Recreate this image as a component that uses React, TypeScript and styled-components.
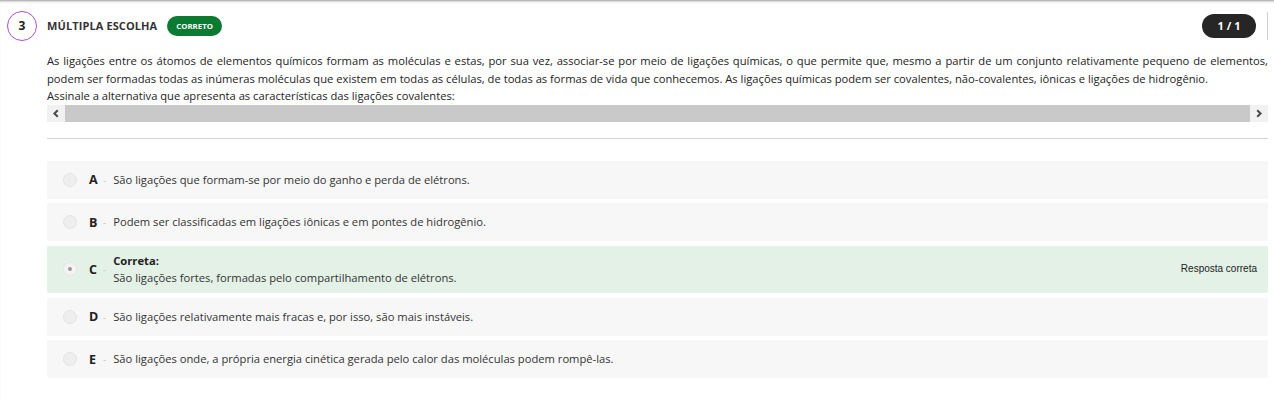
import React from "react";
import styled, { createGlobalStyle } from "styled-components";

const Global = createGlobalStyle`
  html, body { margin: 0; padding: 0; background: #fff; }
  body { font-family: "Open Sans", "Liberation Sans", sans-serif; color: #222; }
`;

const Page = styled.div`
  width: 1274px;
  height: 400px;
  box-sizing: border-box;
  border-top: 1px solid #b8b8b8;
  box-shadow: inset 0 2px 2px -1px rgba(0, 0, 0, 0.18);
  overflow: hidden;
`;

const Header = styled.div`
  display: flex;
  align-items: center;
  padding: 9px 6px 0 7px;
  height: 31px;
`;

const Number = styled.div`
  width: 28px;
  height: 28px;
  border: 1px solid #b04ed0;
  border-radius: 50%;
  display: flex;
  align-items: center;
  justify-content: center;
  font-size: 12px;
  font-weight: 700;
  color: #222;
`;

const Title = styled.div`
  margin-left: 10px;
  font-size: 11px;
  font-weight: 700;
  color: #333;
  letter-spacing: 0.1px;
`;

const Badge = styled.div`
  margin-left: 10px;
  height: 20px;
  padding: 0 9px;
  border-radius: 10px;
  background: #0a7b30;
  color: #fff;
  font-size: 7.8px;
  font-weight: 700;
  display: flex;
  align-items: center;
`;

const Spacer = styled.div`
  flex: 1;
`;

const Counter = styled.div`
  width: 54px;
  height: 24px;
  border-radius: 12px;
  background: #262626;
  color: #fff;
  font-size: 11px;
  font-weight: 700;
  display: flex;
  align-items: center;
  justify-content: center;
`;

const VLine = styled.div`
  width: 1px;
  height: 28px;
  background: #cfcfcf;
  margin-left: 11px;
`;

const Body = styled.div`
  padding: 11px 6px 0 47px;
`;

const Statement = styled.p`
  margin: 0;
  font-size: 11.2px;
  line-height: 17.5px;
  text-align: justify;
  color: #222;
`;

const ScrollBar = styled.div`
  display: flex;
  height: 17px;
  background: #f1f1f1;
`;

const ScrollArrow = styled.div`
  width: 18px;
  display: flex;
  align-items: center;
  justify-content: center;
`;

const ScrollThumb = styled.div`
  flex: 1;
  background: #c9c9c9;
`;

const Divider = styled.div`
  height: 1px;
  background: #d6d6d6;
  margin: 16px 0 22px;
`;

const Options = styled.div`
  display: flex;
  flex-direction: column;
  gap: 4.5px;
`;

const Option = styled.div<{ $correct?: boolean }>`
  display: flex;
  align-items: center;
  min-height: 38px;
  padding: ${(p) => (p.$correct ? "6.25px 11px 6.25px 16px" : "0 11px 0 16px")};
  box-sizing: border-box;
  border-radius: 2px;
  background: ${(p) => (p.$correct ? "#e3f1e7" : "#f7f7f7")};
`;

const Radio = styled.div<{ $checked?: boolean }>`
  width: 12px;
  height: 12px;
  border-radius: 50%;
  border: 1px solid ${(p) => (p.$checked ? "#e6e6e6" : "#e4e4e4")};
  background: ${(p) => (p.$checked ? "#f3f3f3" : "#eeeeee")};
  display: flex;
  align-items: center;
  justify-content: center;
  flex-shrink: 0;
  &::after {
    content: "";
    display: ${(p) => (p.$checked ? "block" : "none")};
    width: 4px;
    height: 4px;
    border-radius: 50%;
    background: #9a9a9a;
  }
`;

const Letter = styled.div`
  margin-left: 12px;
  width: 10px;
  font-size: 12.5px;
  font-weight: 700;
  color: #222;
`;

const Dash = styled.div`
  margin-left: 4px;
  font-size: 10px;
  color: #c8c8c8;
`;

const OptionText = styled.div`
  margin-left: 7px;
  font-size: 11.2px;
  line-height: 17.5px;
  color: #333;
  flex: 1;
`;

const CorrectLabel = styled.div`
  font-weight: 700;
  color: #222;
`;

const Feedback = styled.div`
  font-family: "Liberation Sans", Arial, sans-serif;
  font-size: 10px;
  color: #222;
  align-self: flex-start;
  margin-top: 11px;
`;

const ChevronLeft = () => (
  <svg width="8" height="9" viewBox="0 0 8 9">
    <path d="M5.8 1.2 L2.4 4.5 L5.8 7.8" stroke="#4a4a4a" strokeWidth="2" fill="none" />
  </svg>
);

const ChevronRight = () => (
  <svg width="8" height="9" viewBox="0 0 8 9">
    <path d="M2.2 1.2 L5.6 4.5 L2.2 7.8" stroke="#4a4a4a" strokeWidth="2" fill="none" />
  </svg>
);

const options = [
  { letter: "A", text: "São ligações que formam-se por meio do ganho e perda de elétrons." },
  { letter: "B", text: "Podem ser classificadas em ligações iônicas e em pontes de hidrogênio." },
  { letter: "C", text: "São ligações fortes, formadas pelo compartilhamento de elétrons.", correct: true },
  { letter: "D", text: "São ligações relativamente mais fracas e, por isso, são mais instáveis." },
  { letter: "E", text: "São ligações onde, a própria energia cinética gerada pelo calor das moléculas podem rompê-las." },
];

export default function App() {
  return (
    <>
      <Global />
      <Page>
        <Header>
          <Number>3</Number>
          <Title>MÚLTIPLA ESCOLHA</Title>
          <Badge>CORRETO</Badge>
          <Spacer />
          <Counter>1 / 1</Counter>
          <VLine />
        </Header>
        <Body>
          <Statement>
            As ligações entre os átomos de elementos químicos formam as moléculas e estas, por sua vez, associar-se por meio de ligações químicas, o que permite que, mesmo a partir de um conjunto relativamente pequeno de elementos, podem ser formadas todas as inúmeras moléculas que existem em todas as células, de todas as formas de vida que conhecemos. As ligações químicas podem ser covalentes, não-covalentes, iônicas e ligações de hidrogênio.
            <br />
            Assinale a alternativa que apresenta as características das ligações covalentes:
          </Statement>
          <ScrollBar>
            <ScrollArrow>
              <ChevronLeft />
            </ScrollArrow>
            <ScrollThumb />
            <ScrollArrow>
              <ChevronRight />
            </ScrollArrow>
          </ScrollBar>
          <Divider />
          <Options>
            {options.map((o) => (
              <Option key={o.letter} $correct={o.correct}>
                <Radio $checked={o.correct} />
                <Letter>{o.letter}</Letter>
                <Dash>-</Dash>
                <OptionText>
                  {o.correct && <CorrectLabel>Correta:</CorrectLabel>}
                  {o.text}
                </OptionText>
                {o.correct && <Feedback>Resposta correta</Feedback>}
              </Option>
            ))}
          </Options>
        </Body>
      </Page>
    </>
  );
}
